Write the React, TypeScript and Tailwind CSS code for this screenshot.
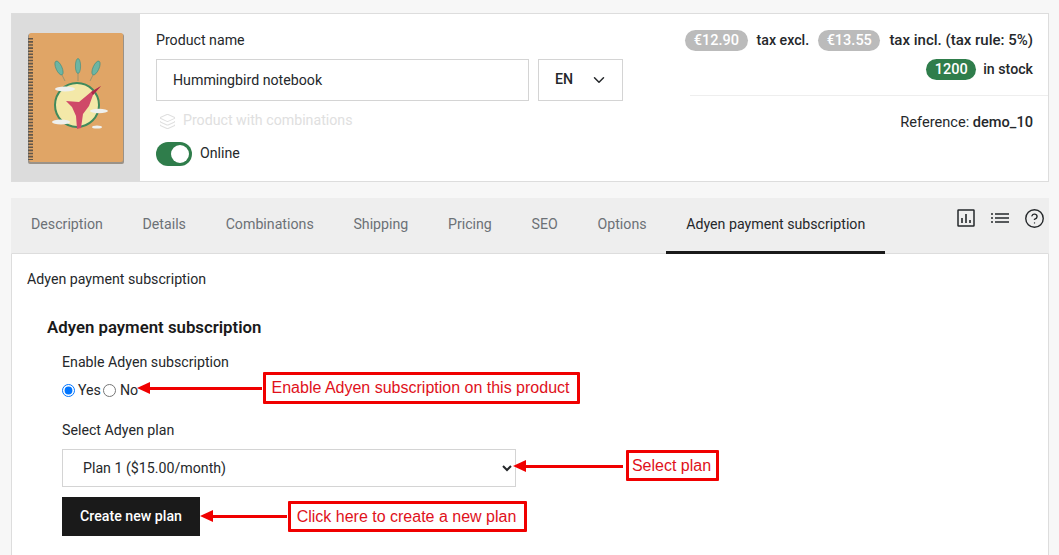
import { ChevronDown, CircleHelp, Layers } from "lucide-react";

const tabs = ["Description", "Details", "Combinations", "Shipping", "Pricing", "SEO", "Options"];

const Notebook = () => (
  <svg viewBox="0 0 128 167" className="block h-[167px] w-[128px] shrink-0">
    <defs>
      <filter id="soft">
        <feGaussianBlur stdDeviation="0.6" />
      </filter>
    </defs>
    <rect width="128" height="167" fill="#dcdcdc" />
    <g filter="url(#soft)">
      <rect x="16" y="20" width="96" height="130" rx="2" fill="#9a9288" />
      <rect x="17" y="19" width="94" height="129" rx="2" fill="#e0a566" />
      <line x1="18.5" y1="24" x2="18.5" y2="146" stroke="#5f544a" strokeWidth="5" strokeDasharray="1.6 1.5" />
      <g fill="#6db5a3" stroke="#3c8c7e" strokeWidth="0.6">
        <ellipse cx="47" cy="54" rx="3" ry="7.5" transform="rotate(-24 47 54)" />
        <ellipse cx="66" cy="52" rx="2.6" ry="7.5" />
        <ellipse cx="84" cy="54" rx="3" ry="7.5" transform="rotate(24 84 54)" />
      </g>
      <g stroke="#8a8f70" strokeWidth="0.8">
        <line x1="50" y1="61" x2="53" y2="67" />
        <line x1="66" y1="59" x2="66" y2="67" />
        <line x1="81" y1="61" x2="78" y2="67" />
      </g>
      <circle cx="65" cy="91" r="22" fill="#f3e8a8" stroke="#3f8a5c" strokeWidth="2" />
      <path d="M54 87 L67 88 L79 78 L89 72 L81 81 L77 92 L71 100 L69 114 L65 115 L64 102 L60 93 Z" fill="#cf4a68" />
      <path d="M79 78 L89 72 L81 81 Z" fill="#a92a48" />
      <g fill="#eef0ee">
        <ellipse cx="53" cy="75" rx="10" ry="2.6" />
        <ellipse cx="87" cy="97" rx="9" ry="2.2" />
        <ellipse cx="49" cy="108" rx="9" ry="2.4" />
        <ellipse cx="85" cy="113" rx="5" ry="1.6" />
      </g>
    </g>
  </svg>
);

const Note = ({ text, className }: { text: string; className: string }) => (
  <div
    className={`absolute flex items-center justify-center rounded-[1px] border-[3px] border-[#f00000] bg-white pr-[2px] font-['Liberation_Sans',sans-serif] text-[16px] text-[#e0111b] ${className}`}
  >
    {text}
  </div>
);

const Arrow = ({ className }: { className: string }) => (
  <div className={`absolute flex items-center ${className}`}>
    <div className="h-0 w-0 border-y-[6.5px] border-r-[13px] border-y-transparent border-r-[#f00000]" />
    <div className="h-[3px] flex-1 bg-[#f00000]" />
  </div>
);

export default function App() {
  return (
    <div className="relative h-[555px] w-[1059px] overflow-hidden bg-[#f7f7f7] pl-[11px] pr-[10px] pt-[13px] font-['Roboto',sans-serif] text-[14.2px] text-[#25282b]">
      <div className="flex h-[169px] border border-[#dddddd] bg-white">
        <Notebook />
        <div className="w-[528px] shrink-0 pl-[16px] pt-[16px]">
          <div className="leading-[20px]">Product name</div>
          <div className="mt-[9px] flex gap-[9px]">
            <input
              defaultValue="Hummingbird notebook"
              className="h-[42px] w-[373px] border border-[#d4d4d4] pl-[16px]"
            />
            <div className="flex h-[42px] w-[85px] items-center justify-between border border-[#d4d4d4] pl-[16px] pr-[14px] font-medium">
              EN
              <ChevronDown size={18} strokeWidth={2} />
            </div>
          </div>
          <div className="mt-[10px] flex h-[20px] items-center gap-[7px] pl-[3px] text-[#e0e0e0]">
            <Layers size={17} strokeWidth={1.5} />
            Product with combinations
          </div>
          <div className="mt-[11px] flex items-center gap-[8px]">
            <div className="flex h-[24px] w-[36px] items-center justify-end rounded-full bg-[#2f7d4b] pr-[3px]">
              <div className="h-[18px] w-[18px] rounded-full bg-white" />
            </div>
            Online
          </div>
        </div>
        <div className="flex min-w-0 flex-1 flex-col">
          <div className="ml-[22px] h-[82px] whitespace-nowrap border-b border-[#eeeeee] pr-[15px] pt-[16px] font-medium leading-[21px]">
            <div className="flex items-center justify-end">
              <span className="rounded-full bg-[#bbbbbb] px-[8.5px] text-[14.5px] leading-[21px] text-white">€12.90</span>
              <span className="ml-[9px]">tax excl.</span>
              <span className="ml-[9px] rounded-full bg-[#bbbbbb] px-[8.5px] text-[14.5px] leading-[21px] text-white">€13.55</span>
              <span className="ml-[9px] text-[15px]">tax incl. (tax rule: 5%)</span>
            </div>
            <div className="mt-[8px] flex items-center justify-end">
              <span className="rounded-full bg-[#2f7d4b] px-[8.5px] text-[14.5px] leading-[21px] text-white">1200</span>
              <span className="ml-[7px]">in stock</span>
            </div>
          </div>
          <div className="pr-[15px] pt-[16px] text-right text-[14.6px] leading-[20px]">
            Reference: <span className="font-medium">demo_10</span>
          </div>
        </div>
      </div>

      <div className="mt-[16px] flex h-[56px] border border-b-[#dddddd] border-l-[#eeeeee] border-r-[#eeeeee] border-t-[#eeeeee] bg-[#eeeeee]">
        <div className="flex flex-1 gap-[39.7px] pl-[19px]">
          {tabs.map((tab) => (
            <div key={tab} className="flex items-center pb-[2px] text-[#6c7176]">
              {tab}
            </div>
          ))}
          <div className="-ml-[20px] -mb-px flex w-[219px] items-center justify-center border-b-[3px] border-[#1a1a1a] pb-[1px]">
            Adyen payment subscription
          </div>
        </div>
        <div className="flex items-start pr-[3px] pt-[10px]">
          <svg viewBox="0 0 18 18" className="h-[18px] w-[18px]" fill="none" stroke="currentColor">
            <rect x="1" y="1" width="16" height="16" rx="0.5" strokeWidth="1.5" />
            <path d="M5 14V9M9 14V5M13 14v-3" strokeWidth="1.6" />
          </svg>
          <svg viewBox="0 0 18 12" className="ml-[16px] mt-[3px] h-[12px] w-[18px]" fill="none" stroke="currentColor" strokeWidth="1.4">
            <path d="M0 2h2M4 2h14M0 6h2M4 6h14M0 10h2M4 10h14" />
          </svg>
          <CircleHelp size={21} strokeWidth={1.6} className="-mt-[1px] ml-[15px]" />
        </div>
      </div>

      <div className="h-[320px] border-x border-[#dddddd] bg-white pl-[15px] pt-[15px]">
        <div className="leading-[20px]">Adyen payment subscription</div>
        <div className="pl-[20px] pt-[28px]">
          <div className="text-[16.8px] font-semibold leading-[20px] text-[#1a1a1a]">Adyen payment subscription</div>
          <div className="pl-[15px] pt-[15px]">
            <div className="leading-[20px]">Enable Adyen subscription</div>
            <div className="mt-[9px] flex h-[20px] items-center">
              <input type="radio" name="enable" defaultChecked className="m-0 mb-[1px] mr-[3px] h-[13px] w-[13px]" />
              Yes
              <input type="radio" name="enable" className="m-0 mb-[1px] ml-[2px] mr-[4px] h-[13px] w-[13px]" />
              No
            </div>
            <div className="mt-[19px] leading-[20px]">Select Adyen plan</div>
            <select className="mt-[9px] block h-[38px] w-[454px] border border-[#d4d4d4] bg-white pl-[16px]">
              <option>Plan 1 ($15.00/month)</option>
            </select>
            <div className="mt-[10px] flex h-[39px] w-[138px] items-center justify-center bg-[#1a1a1a] font-medium text-white">
              Create new plan
            </div>
          </div>
        </div>
      </div>

      <Arrow className="left-[137px] top-[382px] w-[125px]" />
      <Note text="Enable Adyen subscription on this product" className="left-[263px] top-[372px] h-[32px] w-[317px]" />
      <Arrow className="left-[513px] top-[460px] w-[110px]" />
      <Note text="Select plan" className="left-[626px] top-[450px] h-[31px] w-[93px]" />
      <Arrow className="left-[200px] top-[510px] w-[87px]" />
      <Note text="Click here to create a new plan" className="left-[288px] top-[501px] h-[31px] w-[239px]" />
    </div>
  );
}
